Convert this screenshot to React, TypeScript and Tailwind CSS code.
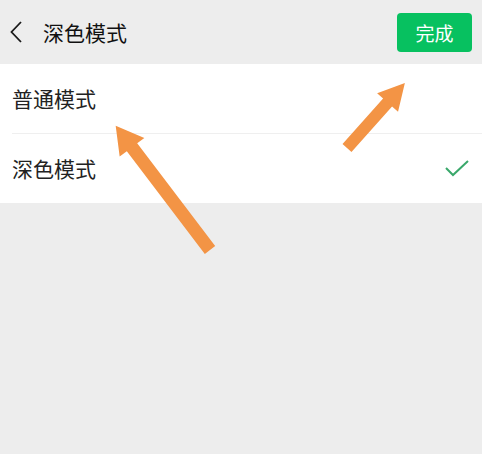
import React from "react";

export default function App() {
  const font = { fontFamily: '"Noto Sans CJK SC", "Noto Sans", sans-serif' };
  return (
    <div className="relative w-[482px] h-[454px] bg-[#ededed] overflow-hidden" style={font}>
      <div className="h-[64px] flex items-center justify-between pl-[9px] pr-[10px]">
        <div className="flex items-center">
          <svg width="15" height="24" viewBox="0 0 15 24" className="mr-[19px]">
            <path d="M12 2 L2.5 12 L12 22" fill="none" stroke="#1a1a1a" strokeWidth="1.8" />
          </svg>
          <span className="text-[21px] leading-none font-normal text-[#111]">深色模式</span>
        </div>
        <div className="w-[75px] h-[39px] rounded-[4px] bg-[#07c160] flex items-center justify-center text-white text-[19px] leading-none">
          完成
        </div>
      </div>
      <div className="bg-white">
        <div className="h-[69px] flex items-center pl-[12px] text-[21px] leading-none text-[#222]">普通模式</div>
        <div className="ml-[12px] h-px bg-[#efefef]" />
        <div className="h-[69px] flex items-center justify-between pl-[12px] pr-[12px] text-[21px] leading-none text-[#222]">
          <span>深色模式</span>
          <svg width="26" height="20" viewBox="0 0 26 20">
            <path d="M2 9 L9 16 L24 2" fill="none" stroke="#3aa86b" strokeWidth="2" />
          </svg>
        </div>
      </div>
      <svg className="absolute left-0 top-0" width="482" height="454" viewBox="0 0 482 454">
        <g transform="translate(210 250) rotate(-127.2)">
          <polygon points="0,-6.5 129,-6.5 129,-15.5 156,0 129,15.5 129,6.5 0,6.5" fill="#f39445" />
        </g>
        <g transform="translate(347 148) rotate(-48.3)">
          <polygon points="0,-6 61,-6 61,-14 87,0 61,14 61,6 0,6" fill="#f39445" />
        </g>
      </svg>
    </div>
  );
}
